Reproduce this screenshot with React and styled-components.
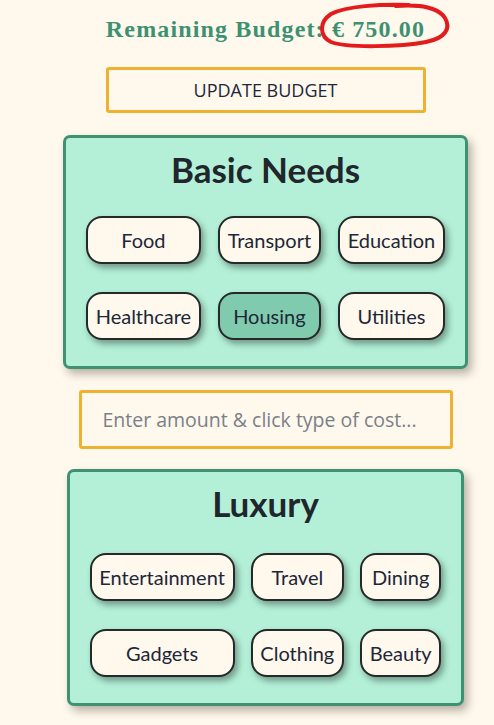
import React from "react";
import styled, { createGlobalStyle } from "styled-components";

const Global = createGlobalStyle`
  html, body { margin: 0; padding: 0; background: #fef8ed; }
  body { font-family: "Lato", "Open Sans", sans-serif; }
`;

const Page = styled.main`
  display: flex;
  flex-direction: column;
  align-items: center;
  padding: 14px 0 20px 37px;
`;

const Title = styled.h1`
  position: relative;
  margin: 0;
  font-family: "Liberation Serif", "DejaVu Serif", serif;
  font-weight: 700;
  font-size: 24px;
  line-height: 30px;
  color: #3d9171;
  letter-spacing: 1.15px;
  white-space: nowrap;
`;

const Amount = styled.span`
  position: relative;
`;

const Scribble = styled.svg`
  position: absolute;
  left: -13px;
  top: -16px;
  width: 134px;
  height: 50px;
  overflow: visible;
  pointer-events: none;
`;

const UpdateButton = styled.button`
  margin-top: 23px;
  width: 320px;
  height: 46px;
  background: transparent;
  border: 3px solid #efb230;
  border-radius: 3px;
  font-family: "Open Sans", sans-serif;
  font-size: 18px;
  color: #1d2738;
`;

const Card = styled.section`
  margin-top: ${(p) => p.$top}px;
  background: #b4f0d8;
  border: 3px solid #3e9271;
  border-radius: 7px;
  box-shadow: 4px 5px 8px rgba(60, 50, 30, 0.35);
  padding: 9px 20px 26px;
  display: flex;
  flex-direction: column;
  align-items: center;
`;

const CardTitle = styled.h2`
  margin: 0;
  font-family: "Lato", sans-serif;
  font-weight: 700;
  font-size: 35px;
  line-height: 44px;
  color: #20262c;
`;

const Grid = styled.div`
  margin-top: ${(p) => p.$top}px;
  display: grid;
  grid-template-columns: repeat(3, auto);
  column-gap: ${(p) => p.$gap}px;
  row-gap: 28px;
`;

const Chip = styled.button`
  height: 48px;
  padding: 0 7.75px;
  border: 2px solid #26282a;
  border-radius: 16px;
  background: ${(p) => (p.$active ? "#80cbad" : "#fef8ed")};
  box-shadow: 3px 4px 6px rgba(30, 50, 40, 0.45);
  font-family: "Lato", sans-serif;
  font-size: 20px;
  color: #1d2738;
  white-space: nowrap;
`;

const AmountInput = styled.input`
  margin-top: 21px;
  width: 374px;
  height: 59px;
  box-sizing: border-box;
  border: 3px solid #efb230;
  border-radius: 3px;
  background: transparent;
  padding: 0 21px;
  font-family: "Open Sans", sans-serif;
  font-size: 19.5px;
  color: #1d2738;
  outline: none;
  &::placeholder { color: #7b8087; }
`;

const basic = ["Food", "Transport", "Education", "Healthcare", "Housing", "Utilities"];
const luxury = ["Entertainment", "Travel", "Dining", "Gadgets", "Clothing", "Beauty"];

export default function App() {
  return (
    <>
      <Global />
      <Page>
        <Title>
          Remaining Budget:{" "}
          <Amount>
            € 750.00
            <Scribble viewBox="0 0 134 50">
              <path
                d="M90 5 C 62 4, 27 6, 12 14 C 0 22, 0 36, 12 42 C 27 48, 82 47, 107 42 C 127 38, 132 28, 126 18 C 120 8, 102 4, 77 6"
                fill="none"
                stroke="#e41b1d"
                strokeWidth="4"
                strokeLinecap="round"
              />
            </Scribble>
          </Amount>
        </Title>
        <UpdateButton>UPDATE BUDGET</UpdateButton>
        <Card $top={22}>
          <CardTitle>Basic Needs</CardTitle>
          <Grid $top={25} $gap={17}>
            {basic.map((b) => (
              <Chip key={b} $active={b === "Housing"}>{b}</Chip>
            ))}
          </Grid>
        </Card>
        <AmountInput placeholder="Enter amount & click type of cost..." />
        <Card $top={20}>
          <CardTitle>Luxury</CardTitle>
          <Grid $top={28} $gap={16}>
            {luxury.map((b) => (
              <Chip key={b}>{b}</Chip>
            ))}
          </Grid>
        </Card>
      </Page>
    </>
  );
}
